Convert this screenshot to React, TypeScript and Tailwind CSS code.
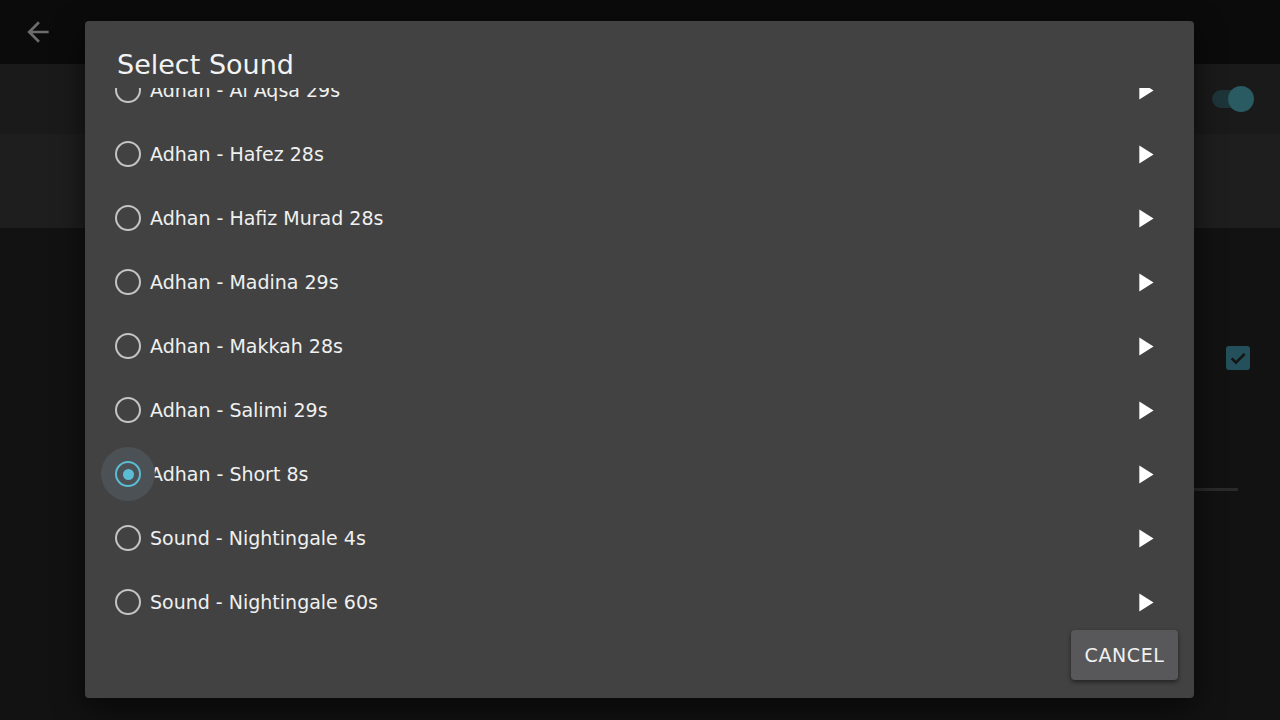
import React from 'react';

const sounds = [
  'Adhan - Al Aqsa 29s',
  'Adhan - Hafez 28s',
  'Adhan - Hafiz Murad 28s',
  'Adhan - Madina 29s',
  'Adhan - Makkah 28s',
  'Adhan - Salimi 29s',
  'Adhan - Short 8s',
  'Sound - Nightingale 4s',
  'Sound - Nightingale 60s',
];

const selected = 'Adhan - Short 8s';

function PlayIcon() {
  return (
    <svg viewBox="0 0 24 24" className="w-[31px] h-[31px] ml-auto shrink-0" fill="#ffffff">
      <path d="M8 5v14l11-7z" />
    </svg>
  );
}

function Radio({ checked }: { checked: boolean }) {
  return (
    <div className="relative w-[26px] h-[26px] shrink-0">
      {checked && <div className="absolute -inset-[14px] rounded-full bg-[#4b5154]" />}
      <div
        className={
          checked
            ? 'relative w-full h-full rounded-full border-[2.5px] border-[#5bbdd3] flex items-center justify-center'
            : 'relative w-full h-full rounded-full border-[2.5px] border-[#c4c4c4]'
        }
      >
        {checked && <div className="w-[11px] h-[11px] rounded-full bg-[#5bbdd3]" />}
      </div>
    </div>
  );
}

export default function App() {
  return (
    <div
      className="relative w-full h-[720px] overflow-hidden bg-[#121212]"
      style={{ fontFamily: '"DejaVu Sans", "Liberation Sans", sans-serif' }}
    >
      {/* page behind the dialog */}
      <div className="h-16 bg-[#0b0b0b] flex items-center pl-[22px]">
        <svg viewBox="0 0 24 24" className="w-[32px] h-[32px]" fill="#6c6c6c">
          <path d="M20 11H7.83l5.59-5.59L12 4l-8 8 8 8 1.41-1.41L7.83 13H20v-2z" />
        </svg>
      </div>
      <div className="h-[70px] bg-[#1a1a1a] flex items-center justify-end pr-[35px]">
        <div className="relative w-[33px] h-[18px] rounded-full bg-[#1d3539]">
          <div className="absolute left-[16px] -top-[4px] w-[26px] h-[26px] rounded-full bg-[#2a5a62]" />
        </div>
      </div>
      <div className="h-[94px] bg-[#1e1e1e]" />
      <div className="flex flex-col items-end pr-[30px] pt-[118px]">
        <div className="w-[24px] h-[24px] rounded-[3px] bg-[#23505a] flex items-center justify-center">
          <svg viewBox="0 0 24 24" className="w-[20px] h-[20px]" fill="none" stroke="#151515" strokeWidth="3.2">
            <path d="M4.5 12.5l5 5L20 7" />
          </svg>
        </div>
        <div className="mt-[118px] mr-[12px] w-[200px] h-[3px] bg-[#2a2a2a]" />
      </div>
      <div className="pl-[117px] pt-[187px] text-[16px] text-[#6a6a6a]">
        By default your adhan will play using the ringtone
      </div>

      {/* dialog */}
      <div className="absolute left-[85px] top-[21px] w-[1109px] h-[677px] bg-[#424242] rounded-[4px] shadow-[0_10px_30px_rgba(0,0,0,0.6)] flex flex-col">
        <div className="h-[67px] pt-[28px] pl-[32px] shrink-0">
          <h1 className="text-[27px] leading-[32px] text-[#f3f3f3]">Select Sound</h1>
        </div>
        <div className="h-[538px] overflow-hidden shrink-0">
          <div className="-mt-[30px]">
            {sounds.map((s) => (
              <div key={s} className="h-16 flex items-center pl-[30px] pr-[34px]">
                <Radio checked={s === selected} />
                <span className="ml-[9px] text-[19px] text-[#f0f0f0]">{s}</span>
                <PlayIcon />
              </div>
            ))}
          </div>
        </div>
        <div className="flex justify-end pr-[16px] pt-[4px]">
          <button className="w-[107px] h-[50px] rounded-[4px] bg-[#58585a] text-[#f0f0f0] text-[19px] tracking-[0.6px] shadow-[0_2px_4px_rgba(0,0,0,0.5)]">
            CANCEL
          </button>
        </div>
      </div>
    </div>
  );
}
